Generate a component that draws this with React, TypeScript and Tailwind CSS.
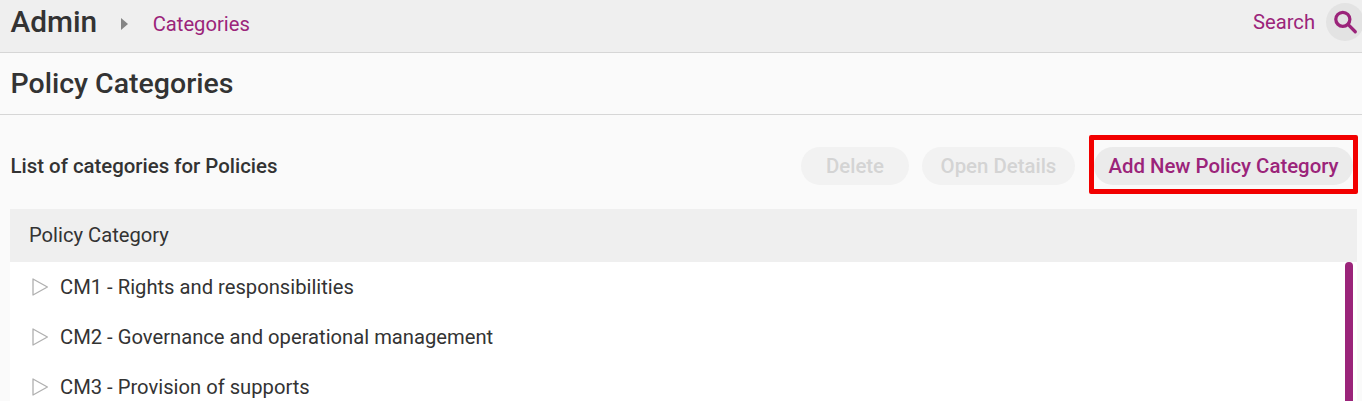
const rows = [
  "CM1 - Rights and responsibilities",
  "CM2 - Governance and operational management",
  "CM3 - Provision of supports",
];

const TreeArrow = () => (
  <svg viewBox="0 0 16 18" fill="none" stroke="#b0b0b0" strokeWidth="1.3" strokeLinejoin="round" className="h-[18px] w-4 shrink-0">
    <path d="M1 1 L15.4 9 L1 17 Z" />
  </svg>
);

export default function App() {
  return (
    <div className="h-[401px] w-[1362px] overflow-hidden bg-[#fafafa] text-[#333333] font-['Roboto',sans-serif]">
      <header className="flex h-[53px] items-center overflow-hidden border-b border-[#d6d6d6] bg-[#efefef] pb-[8px] pl-[10.5px]">
        <h1 className="text-[29.8px] leading-[44px] font-medium">Admin</h1>
        <svg viewBox="0 0 8 12" className="ml-[24px] mt-[4px] h-[12px] w-[8px] shrink-0 fill-[#858585]">
          <path d="M0 0 L7 6 L0 12 Z" />
        </svg>
        <a className="ml-[23.5px] mt-[5px] text-[20.2px] text-[#9b247a]">Categories</a>
        <span className="ml-auto mt-[1px] text-[20.2px] text-[#9b247a]">Search</span>
        <button className="ml-[11px] mr-[-2px] flex h-[38px] w-[38px] shrink-0 items-center justify-center rounded-full bg-[#e3e3e3]">
          <svg viewBox="0 0 24 24" fill="none" stroke="#9b247a" strokeWidth="3" strokeLinecap="round" className="h-[26px] w-[26px]">
            <circle cx="10" cy="9.5" r="6.5" />
            <path d="M15 14.5 L21.5 21" />
          </svg>
        </button>
      </header>

      <div className="flex h-[62px] items-center border-b border-[#d6d6d6] pl-[10.5px]">
        <h2 className="mt-[2px] text-[28.5px] font-medium">Policy Categories</h2>
      </div>

      <div className="flex h-[94px] items-center pl-[10.5px] pr-[4px] pt-[8px]">
        <p className="text-[20.4px] font-medium">List of categories for Policies</p>
        <div className="ml-auto flex items-center gap-[13px]">
          <button className="h-[38px] w-[108px] rounded-full bg-[#f2f2f2] text-[20.4px] font-medium text-[#d4d4d4]">Delete</button>
          <button className="mr-[1px] h-[38px] w-[153px] rounded-full bg-[#f2f2f2] text-[20.4px] font-medium text-[#d4d4d4]">Open Details</button>
          <div className="mt-[-3px] rounded-[2px] border-[5px] border-[#f20000] pt-[7px] pb-[4px]">
            <button className="block h-[38px] w-[259px] rounded-full bg-[#ebebeb] text-[20.4px] font-medium text-[#9b247a]">Add New Policy Category</button>
          </div>
        </div>
      </div>

      <div className="ml-[10px] w-[1347px]">
        <div className="flex h-[53px] items-center bg-[#efefef] pl-[19px] text-[20.2px]">Policy Category</div>
        <div className="relative bg-white">
          <div className="absolute right-[4px] top-0 h-[200px] w-[8px] rounded-full bg-[#9b247a]" />
          {rows.map((row) => (
            <div key={row} className="flex h-[50px] items-center gap-[12px] pl-[22px] text-[20.2px]">
              <TreeArrow />
              <span>{row}</span>
            </div>
          ))}
        </div>
      </div>
    </div>
  );
}
